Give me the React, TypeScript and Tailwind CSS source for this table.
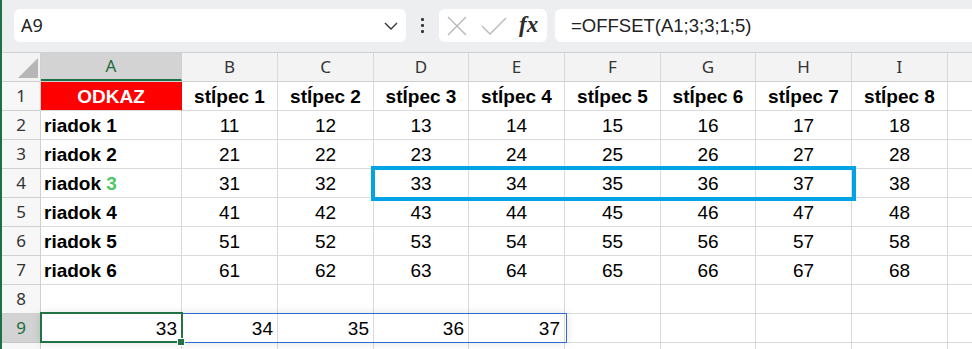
import React from "react";

const colW = [141, 96, 96, 95, 96, 96, 95, 96, 96];
const letters = ["A", "B", "C", "D", "E", "F", "G", "H", "I"];

type Cell = { t: string; bold?: boolean; align?: "left" | "center" | "right"; red?: boolean; green3?: boolean };

const rows: Cell[][] = [
  [{ t: "ODKAZ", bold: true, align: "center", red: true }, ...[1, 2, 3, 4, 5, 6, 7, 8].map((n) => ({ t: `stĺpec ${n}`, bold: true, align: "center" as const }))],
  ...[1, 2, 3, 4, 5, 6].map((r) => [
    { t: `riadok ${r}`, bold: true, align: "left" as const, green3: r === 3 },
    ...[1, 2, 3, 4, 5, 6, 7, 8].map((c) => ({ t: `${r}${c}`, align: "center" as const })),
  ]),
  [],
  [
    { t: "33", align: "right" },
    { t: "34", align: "right" },
    { t: "35", align: "right" },
    { t: "36", align: "right" },
    { t: "37", align: "right" },
  ],
  [],
];

const cellFont = { fontFamily: '"Liberation Sans", Arial, sans-serif' };
const uiFont = { fontFamily: '"Noto Sans", "Open Sans", sans-serif' };

export default function App() {
  return (
    <div className="flex w-[972px] h-[349px] overflow-hidden bg-white">
      <div className="w-[2px] shrink-0 bg-[#1e7145]" />
      <div className="relative flex-1 flex flex-col overflow-hidden">
        {/* toolbar */}
        <div className="h-[52px] shrink-0 bg-[#edeef0] flex items-start pt-[9px]">
          <div className="ml-[12px] w-[392px] h-[33px] bg-white rounded-[6px] flex items-center justify-between pl-[7px] pr-[8px]">
            <span className="text-[18px] text-[#222]" style={uiFont}>A9</span>
            <svg width="14" height="8" viewBox="0 0 14 8" fill="none">
              <path d="M1 1 L7 7 L13 1" stroke="#333" strokeWidth="1.4" />
            </svg>
          </div>
          <div className="w-[33px] h-[33px] flex flex-col items-center justify-center gap-[3px]">
            <div className="w-[3px] h-[3px] bg-[#3a3a3a] rounded-[1px]" />
            <div className="w-[3px] h-[3px] bg-[#3a3a3a] rounded-[1px]" />
            <div className="w-[3px] h-[3px] bg-[#3a3a3a] rounded-[1px]" />
          </div>
          <div className="w-[108px] h-[33px] bg-white rounded-[6px] flex items-center pl-[8px]">
            <svg width="20" height="20" viewBox="0 0 20 20" fill="none">
              <path d="M1 1 L19 19 M19 1 L1 19" stroke="#b8b8b8" strokeWidth="1.4" />
            </svg>
            <svg width="26" height="20" viewBox="0 0 26 20" fill="none" className="ml-[14px]">
              <path d="M1 10 L9 18 L25 2" stroke="#b8b8b8" strokeWidth="1.4" />
            </svg>
            <span
              className="ml-[12px] text-[23px] italic font-semibold leading-none text-[#2b2b2b] mt-[-3px]"
              style={{ fontFamily: '"Liberation Serif", "DejaVu Serif", serif' }}
            >
              fx
            </span>
          </div>
          <div className="ml-[8px] flex-1 -mr-[10px] h-[33px] bg-white rounded-[6px] flex items-center pl-[16px]">
            <span className="text-[18.5px] text-[#222]" style={cellFont}>=OFFSET(A1;3;3;1;5)</span>
          </div>
        </div>

        {/* column headers */}
        <div className="flex h-[30px] shrink-0 border-t border-b border-[#d0d0d0] bg-[#f3f3f3]">
          <div className="w-[39px] shrink-0 border-r border-[#d0d0d0] relative">
            <svg width="39" height="28" viewBox="0 0 39 28" className="absolute left-0 top-0">
              <path d="M16 25 L36 5 L36 25 Z" fill="#b6b6b6" />
            </svg>
          </div>
          {letters.map((l, i) => (
            <div
              key={l}
              className={
                i === 0
                  ? "shrink-0 flex items-center justify-center bg-[#d3d3d3] border-r border-[#d0d0d0] border-b-2 border-b-[#1e7145] text-[#1e6b3f] text-[17px]"
                  : "shrink-0 flex items-center justify-center border-r border-[#d8d8d8] text-[#333] text-[17px]"
              }
              style={{ width: colW[i], ...uiFont }}
            >
              {l}
            </div>
          ))}
          <div className="flex-1" />
        </div>

        {/* rows */}
        {rows.map((row, ri) => {
          const rn = ri + 1;
          const sel = rn === 9;
          return (
            <div key={rn} className="flex h-[29px] shrink-0">
              <div
                className={
                  sel
                    ? "w-[39px] shrink-0 flex items-center justify-center bg-[#d3d3d3] border-r border-b border-[#c8c8c8] text-[#1e6b3f] text-[17px]"
                    : "w-[39px] shrink-0 flex items-center justify-center bg-[#f7f7f7] border-r border-b border-[#d0d0d0] text-[#333] text-[17px]"
                }
                style={uiFont}
              >
                {rn < 10 ? rn : ""}
              </div>
              {colW.map((w, ci) => {
                const c = row[ci];
                const base = "shrink-0 flex items-center border-r border-b border-[#dadada] text-[19px] leading-none text-black whitespace-nowrap overflow-hidden";
                const al = !c
                  ? ""
                  : c.align === "center"
                  ? " justify-center"
                  : c.align === "right"
                  ? " justify-end pr-[4px]"
                  : " justify-start pl-[3px]";
                const red = c?.red ? " bg-[#ff0000] text-white border-r-[#ff0000]" : "";
                const bold = c?.bold ? " font-bold" : "";
                return (
                  <div key={ci} className={base + al + red + bold} style={{ width: w, ...cellFont }}>
                    {c ? (
                      c.green3 ? (
                        <span>
                          riadok <span className="text-[#4cc764]">3</span>
                        </span>
                      ) : (
                        c.t
                      )
                    ) : null}
                  </div>
                );
              })}
              <div className="flex-1 border-b border-[#dadada]" />
            </div>
          );
        })}

        {/* spill range */}
        <div className="absolute left-[38px] top-[313px] w-[527px] h-[30px] border border-[#2d6bd1] shadow-[0_0_10px_rgba(0,0,0,0.12)]" />
        {/* selected cell */}
        <div className="absolute left-[38px] top-[312px] w-[143px] h-[31px] border-2 border-[#217346]" />
        <div className="absolute left-[175px] top-[338px] w-[8px] h-[8px] bg-[#217346] border border-white" />
        {/* highlight rectangle */}
        <div className="absolute left-[369px] top-[166px] w-[485px] h-[35px] border-4 border-[#00a3e4]" />
      </div>
    </div>
  );
}
